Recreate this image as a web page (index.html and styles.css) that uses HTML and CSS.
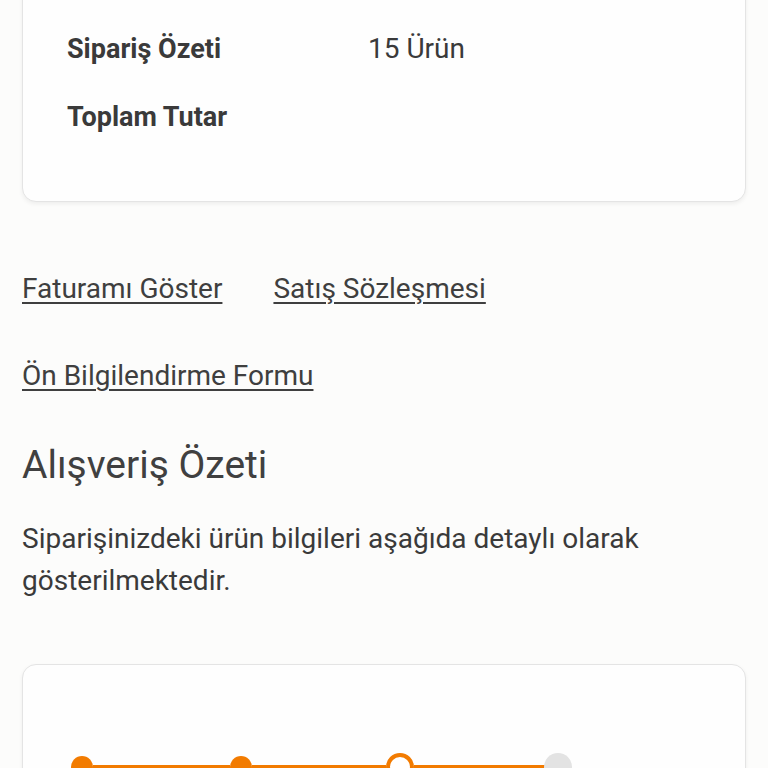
FILE: index.html
```html
<!DOCTYPE html>
<html lang="tr">
<head>
    <meta charset="UTF-8">
    <meta name="viewport" content="width=device-width, initial-scale=1.0">
    <title>Sipariş Detayı</title>
    <link rel="stylesheet" href="styles.css">
</head>
<body>
    <div class="page">
        <div class="card summary">
            <div class="summary-row">
                <span class="label">Sipariş Özeti</span>
                <span class="value">15 Ürün</span>
            </div>
            <div class="summary-row">
                <span class="label">Toplam Tutar</span>
                <span class="value"></span>
            </div>
        </div>

        <div class="links">
            <a href="#">Faturamı Göster</a>
            <a href="#">Satış Sözleşmesi</a>
            <a href="#">Ön Bilgilendirme Formu</a>
        </div>

        <h2 class="title">Alışveriş Özeti</h2>
        <p class="desc">Siparişinizdeki ürün bilgileri aşağıda detaylı olarak gösterilmektedir.</p>

        <div class="card tracker">
            <div class="steps">
                <span class="dot done"></span>
                <span class="bar w1"></span>
                <span class="dot done"></span>
                <span class="bar w2"></span>
                <span class="dot current"></span>
                <span class="bar w3"></span>
                <span class="dot todo"></span>
            </div>
        </div>
    </div>
</body>
</html>
```

FILE: styles.css
```css
* {
    margin: 0;
    padding: 0;
    box-sizing: border-box;
}
body {
    background-color: #fcfcfb;
    color: #3a3a3a;
    font-family: Roboto, "Liberation Sans", sans-serif;
    overflow: hidden;
}
.page {
    padding: 0 22px;
}
.card {
    background-color: #fefefe;
    border: 1px solid #e4e4e4;
    border-radius: 14px;
    box-shadow: 0 2px 4px rgba(0,0,0,0.06);
}
.summary {
    margin-top: -20px;
    padding: 50px 0 66px 44px;
    display: flex;
    flex-direction: column;
    gap: 32px;
}
.summary-row {
    display: flex;
    align-items: baseline;
    line-height: 36px;
}
.summary-row .label {
    width: 301px;
    font-size: 27px;
    font-weight: 700;
}
.summary-row .value {
    font-size: 28px;
    font-weight: 400;
}
.links {
    margin-top: 67px;
    display: flex;
    flex-wrap: wrap;
    column-gap: 51px;
    row-gap: 47px;
    width: 520px;
}
.links a {
    color: #3f3f3f;
    font-size: 28px;
    line-height: 40px;
    text-decoration: underline;
    text-underline-offset: 4px;
    text-decoration-thickness: 2px;
}
.title {
    margin-top: 47px;
    font-size: 39px;
    line-height: 44px;
    font-weight: 400;
    color: #404040;
}
.desc {
    margin-top: 31px;
    font-size: 28px;
    line-height: 42px;
    width: 640px;
}
.tracker {
    margin-top: 62px;
    height: 200px;
    padding: 88px 0 0 48px;
}
.steps {
    display: flex;
    align-items: center;
}
.dot {
    flex: none;
    border-radius: 50%;
    position: relative;
    z-index: 1;
}
.dot.done {
    width: 22px;
    height: 22px;
    background-color: #f27b00;
}
.dot.current {
    width: 28px;
    height: 28px;
    background-color: #fff;
    border: 4px solid #f27b00;
}
.dot.todo {
    width: 28px;
    height: 28px;
    background-color: #e3e3e3;
}
.bar {
    flex: none;
    height: 5px;
    background-color: #f27b00;
}
.bar.w1 { width: 137px; }
.bar.w2 { width: 134px; }
.bar.w3 { width: 134px; margin-right: -4px; }
```
